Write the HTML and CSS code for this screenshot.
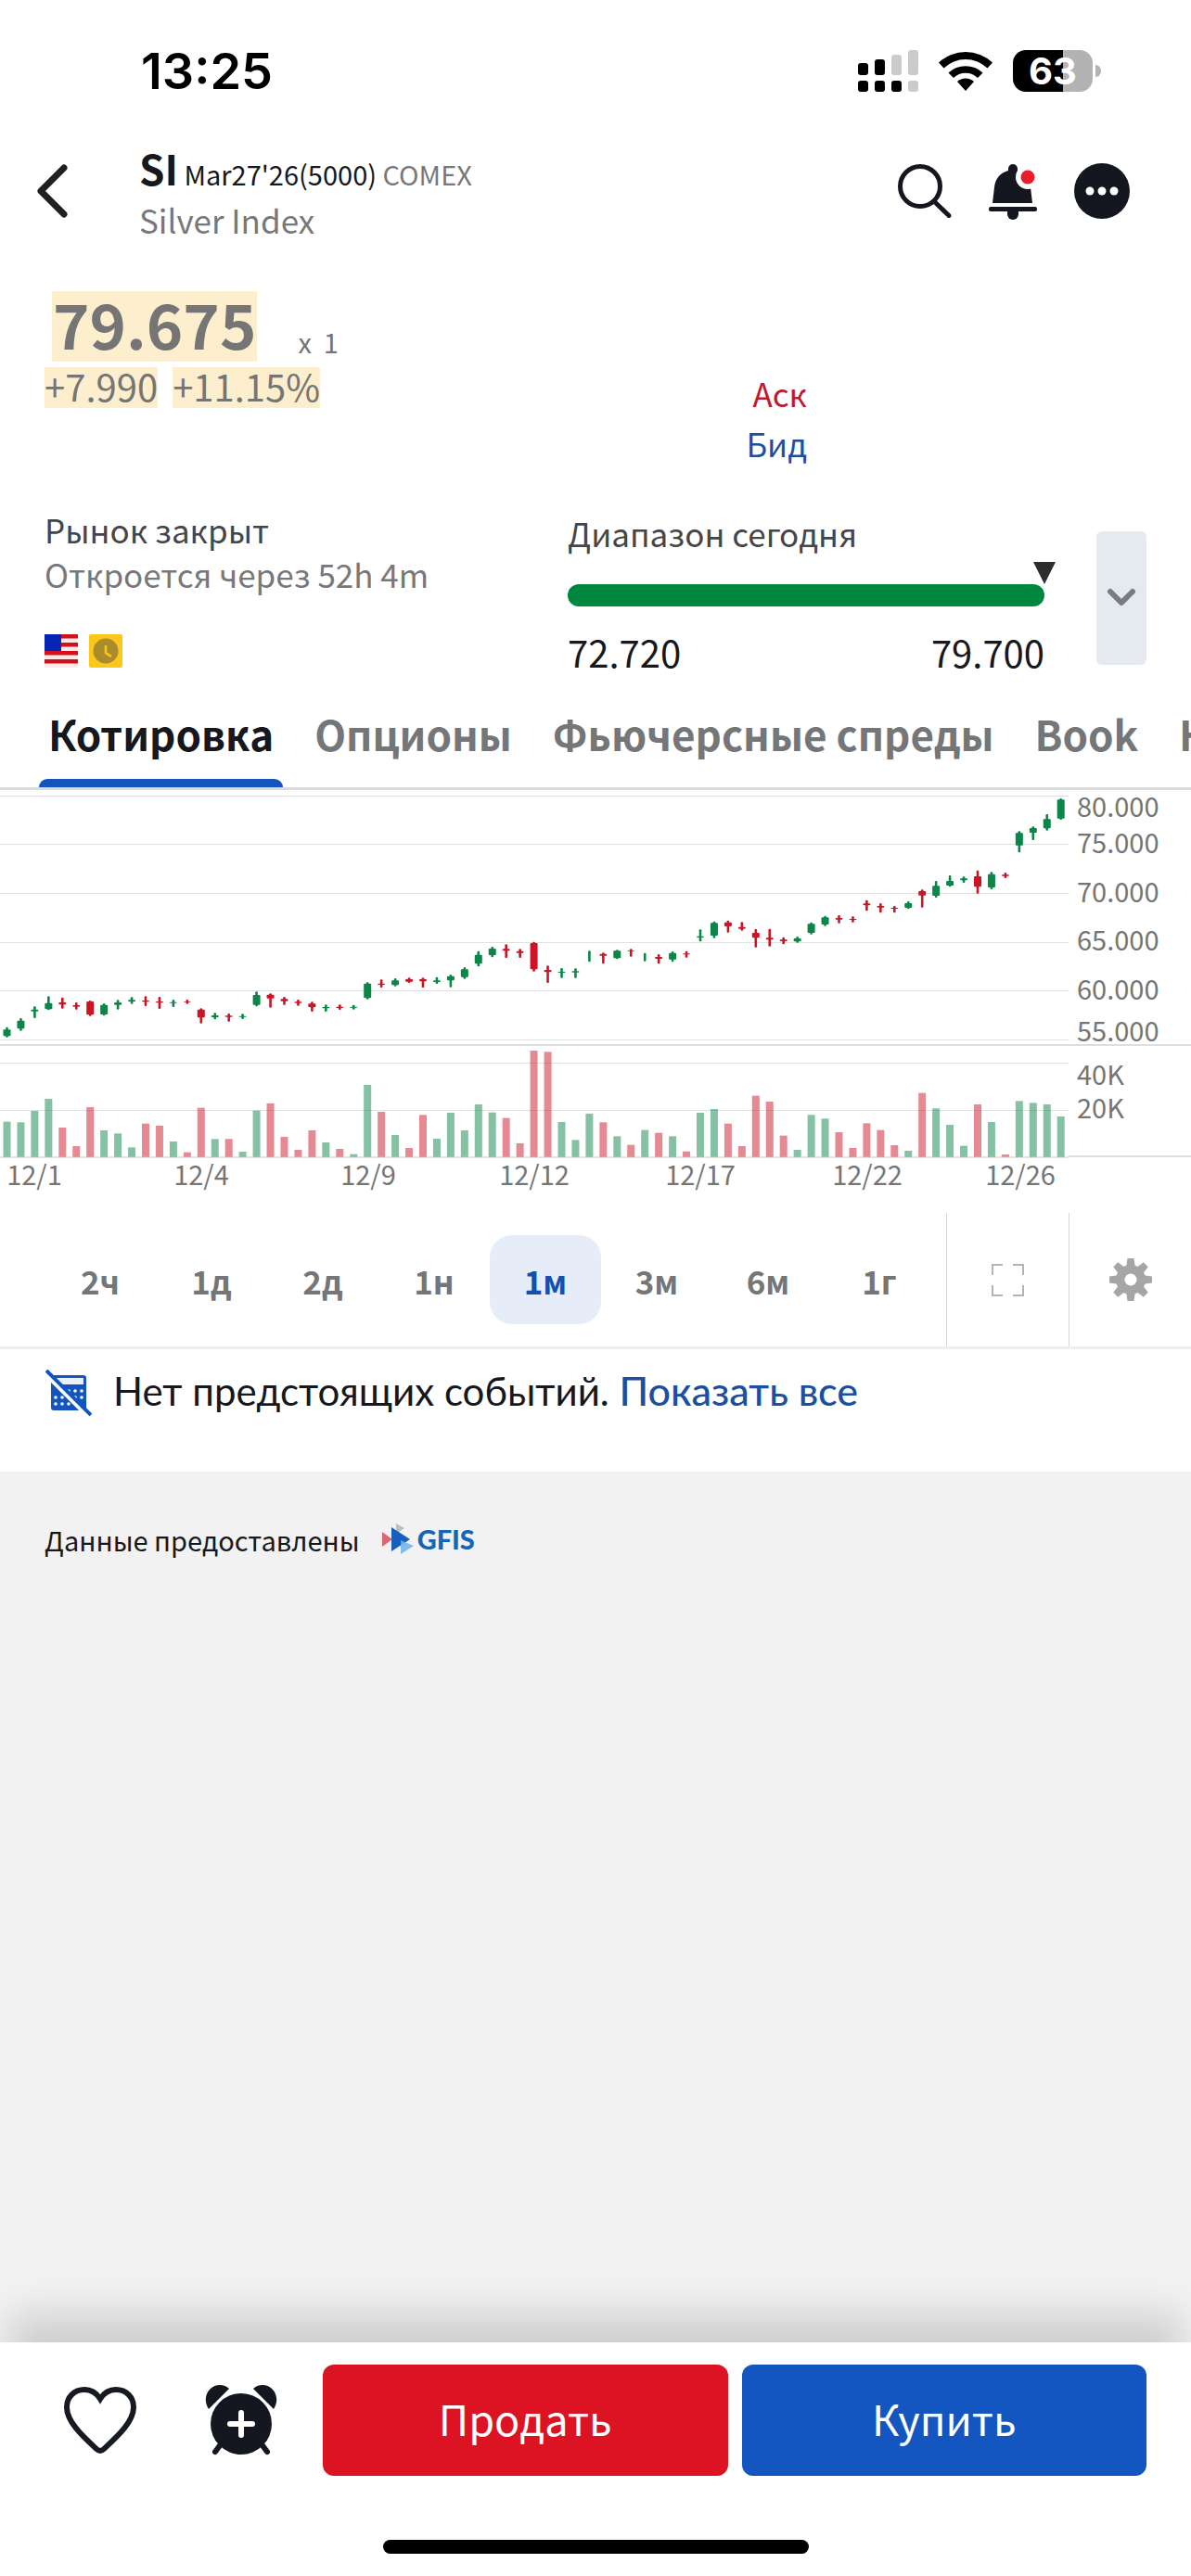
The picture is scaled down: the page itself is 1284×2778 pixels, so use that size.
FILE: index.html
```html
<!DOCTYPE html>
<html lang="ru">
<head>
    <meta charset="UTF-8">
    <meta name="viewport" content="width=device-width, initial-scale=1.0">
    <title>SI Mar27'26 - Silver Index</title>
    <link rel="stylesheet" href="styles.css">
</head>
<body>
    <div class="status-bar">
        <div class="time">13:25</div>
        <div class="status-icons">
            <svg width="65" height="45" viewBox="0 0 65 45">
                <g fill="#000">
                    <rect x="0" y="14" width="11" height="13" rx="3"/>
                    <rect x="18" y="10" width="11" height="17" rx="3"/>
                    <rect x="0" y="33" width="11" height="12" rx="3"/>
                    <rect x="18" y="33" width="11" height="12" rx="3"/>
                    <rect x="36" y="33" width="11" height="12" rx="3"/>
                </g>
                <g fill="#cbcbcb">
                    <rect x="36" y="5" width="11" height="22" rx="3"/>
                    <rect x="54" y="0" width="11" height="27" rx="3"/>
                    <rect x="54" y="33" width="11" height="12" rx="3"/>
                </g>
            </svg>
            <svg width="58" height="43" viewBox="0 0 58 43">
                <path d="M0 12.600A42 42 0 0 1 58 12.600L52.500 18.500A34 34 0 0 0 5.500 18.500Z"/>
                <path d="M10.500 23.500A27 27 0 0 1 47.500 23.500L42 29A19 19 0 0 0 16 29Z"/>
                <path d="M20 33A13 13 0 0 1 38 33L29 43Z"/>
            </svg>
            <div class="battery"><span>63</span></div>
        </div>
    </div>

    <header class="header">
        <button class="icon-btn back" aria-label="Назад">
            <svg width="34" height="58" viewBox="0 0 34 58"><path d="M30 4L5 29L30 54" fill="none" stroke="#1f1f21" stroke-width="7" stroke-linecap="round" stroke-linejoin="round"/></svg>
        </button>
        <div class="title">
            <h1><b>SI</b> Mar27'26(5000) <span>COMEX</span></h1>
            <p>Silver Index</p>
        </div>
        <button class="icon-btn" aria-label="Поиск">
            <svg width="58" height="58" viewBox="0 0 58 58"><g fill="none" stroke="#14171f" stroke-width="5" stroke-linecap="round"><circle cx="24" cy="24" r="21.500"/><path d="M40 41L55 55.500"/></g></svg>
        </button>
        <button class="icon-btn" aria-label="Уведомления">
            <svg width="54" height="61" viewBox="0 0 54 61">
                <path fill="#14171f" d="M22 6a5 5 0 0 1 10 0v2c9 3 13 8 14 18l2 17H5l2-17C8 16 14 10 22 8z"/>
                <rect x="1" y="47" width="52" height="5" rx="2" fill="#14171f"/>
                <path fill="#14171f" d="M21 52h12v3a6 6 0 0 1-12 0z"/>
                <circle cx="43" cy="15" r="13" fill="#fff"/>
                <circle cx="43" cy="15" r="7.500" fill="#ea1c2c"/>
            </svg>
        </button>
        <button class="icon-btn" aria-label="Ещё">
            <svg width="60" height="60" viewBox="0 0 60 60"><circle cx="30" cy="30" r="30" fill="#14171f"/><g fill="#fff"><circle cx="17" cy="30" r="4.500"/><circle cx="30" cy="30" r="4.500"/><circle cx="43" cy="30" r="4.500"/></g></svg>
        </button>
    </header>

    <section class="quote">
        <div>
            <div class="price-row"><strong class="price">79.675</strong><span class="size">x&nbsp; 1</span></div>
            <div class="change-row"><span>+7.990</span><span>+11.15%</span></div>
        </div>
        <div class="bid-ask">
            <div class="ask">Аск</div>
            <div class="bid">Бид</div>
        </div>
    </section>

    <section class="info">
        <div class="market">
            <p class="market-state">Рынок закрыт</p>
            <p class="market-open">Откроется через 52h 4m</p>
            <div class="flags">
                <svg width="36" height="36" viewBox="0 0 36 36">
                    <rect width="36" height="36" rx="2" fill="#fbe9ea"/>
                    <path stroke="#d0131b" stroke-width="4.500" d="M0 2.200h36M0 11.200h36M0 20.200h36M0 29.200h36"/>
                    <rect width="18" height="18" fill="#0526b4"/>
                </svg>
                <svg width="36" height="36" viewBox="0 0 36 36">
                    <rect width="36" height="36" rx="2" fill="#fac81a"/>
                    <circle cx="18" cy="18" r="13.500" fill="#ab8c2c"/>
                    <path d="M18 12v8l6 4" fill="none" stroke="#fac81a" stroke-width="2.500"/>
                </svg>
            </div>
        </div>
        <div class="range">
            <p class="range-title">Диапазон сегодня</p>
            <div class="range-bar">
                <svg class="range-mark" width="24" height="24" viewBox="0 0 24 24"><path d="M0 0h24L12 24z" fill="#2d2d2f"/></svg>
            </div>
            <div class="range-values"><span>72.720</span><span>79.700</span></div>
        </div>
        <button class="expand" aria-label="Развернуть">
            <svg width="32" height="22" viewBox="0 0 32 22"><path d="M4 4l12 12L28 4" fill="none" stroke="#7a7b7e" stroke-width="6" stroke-linecap="round" stroke-linejoin="round"/></svg>
        </button>
    </section>

    <nav class="tabs">
        <a href="#quote" class="active">Котировка</a>
        <a href="#options">Опционы</a>
        <a href="#spreads">Фьючерсные спреды</a>
        <a href="#book">Book</a>
        <a href="#news">Новости</a>
    </nav>

    <svg class="chart" id="chart" viewBox="0 0 1284 456" role="img" aria-label="SI, 1м">
        <g id="grid"></g>
        <g id="bars"></g>
        <g id="labels"></g>
    </svg>

    <div class="periods">
        <div class="period-list">
            <button>2ч</button>
            <button>1д</button>
            <button>2д</button>
            <button>1н</button>
            <button class="active">1м</button>
            <button>3м</button>
            <button>6м</button>
            <button>1г</button>
        </div>
        <button class="tool" aria-label="На весь экран">
            <svg width="35" height="35" viewBox="0 0 35 35"><path d="M1 12V1h11M23 1h11v11M34 23v11H23M12 34H1V23" fill="none" stroke="#b4b4b4" stroke-width="2"/></svg>
        </button>
        <button class="tool" aria-label="Настройки">
            <svg width="46" height="46" viewBox="-23 -23 46 46">
                <g fill="#a6a6a6">
                    <path d="M-5-12L-3.500-23h7L5-12zM-5 12L-3.500 23h7L5 12zM-12-5L-23-3.500v7L-12 5zM12-5L23-3.500v7L12 5z"/>
                    <path transform="rotate(45)" d="M-5-12L-3.500-23h7L5-12zM-5 12L-3.500 23h7L5 12zM-12-5L-23-3.500v7L-12 5zM12-5L23-3.500v7L12 5z"/>
                    <circle r="16"/>
                </g>
                <circle r="6.500" fill="#fff"/>
            </svg>
        </button>
    </div>

    <div class="events">
        <svg width="50" height="50" viewBox="0 0 50 50">
            <rect x="6" y="6" width="38" height="38" rx="3" fill="#1455bd"/>
            <rect x="12" y="9" width="29" height="7" fill="#e8f1fd"/>
            <g fill="#fff"><circle cx="25" cy="23" r="1.800"/><circle cx="32" cy="23" r="1.800"/><circle cx="39" cy="23" r="1.800"/><circle cx="11" cy="30" r="1.800"/><circle cx="18" cy="30" r="1.800"/><circle cx="32" cy="30" r="1.800"/><circle cx="39" cy="30" r="1.800"/><circle cx="11" cy="37" r="1.800"/><circle cx="18" cy="37" r="1.800"/><circle cx="25" cy="37" r="1.800"/></g>
            <path d="M3 8L43 48" stroke="#fff" stroke-width="4"/>
            <path d="M1 1L49 49" stroke="#1455bd" stroke-width="4"/>
        </svg>
        <p>Нет предстоящих событий. <a href="#events">Показать все</a></p>
    </div>

    <main class="rest">
        <div class="provider">
            <span>Данные предоставлены</span>
            <svg width="34" height="34" viewBox="0 0 34 34">
                <path d="M15 0l9 5-9 6z" fill="#b9bcc2"/>
                <path d="M10 4l20 13-20 13z" fill="#1560bd"/>
                <path d="M0 9l11 8-11 8z" fill="#dc6672"/>
                <path d="M20 18l14 6-14 9z" fill="#6fb3ee" opacity="0.850"/>
            </svg>
            <b>GFIS</b>
        </div>
    </main>

    <footer class="footer">
        <div class="actions">
            <div class="action-icons">
                <button class="icon-btn" aria-label="В избранное">
                    <svg width="80" height="74" viewBox="0 0 80 74"><path d="M40 14C35 6 29 4 23 4C12 4 4 12 4 23C4 39 22 55 36 68q4 4 8 0C58 55 76 39 76 23C76 12 68 4 57 4C51 4 45 6 40 14z" fill="none" stroke="#171a20" stroke-width="6"/></svg>
                </button>
                <button class="icon-btn" aria-label="Добавить оповещение">
                    <svg width="80" height="76" viewBox="0 0 80 76">
                        <g fill="#14171f">
                            <circle cx="40" cy="42" r="33"/>
                            <path d="M5 26C-3 14 5 0 17 0q6 0 10 4zM75 26C83 14 75 0 63 0q-6 0-10 4z"/>
                        </g>
                        <path d="M18 64l-6 8M62 64l6 8" stroke="#14171f" stroke-width="6" stroke-linecap="round"/>
                        <path d="M40 30v24M28 42h24" stroke="#fff" stroke-width="6" stroke-linecap="round"/>
                    </svg>
                </button>
            </div>
            <button class="sell">Продать</button>
            <button class="buy">Купить</button>
        </div>
        <div class="home-indicator"></div>
    </footer>
    <script src="chart.js"></script>
</body>
</html>
```
FILE: styles.css
```css
* {
    box-sizing: border-box;
}
body {
    font-family: "Noto Sans CJK SC", "Noto Sans", sans-serif;
    margin: 0;
    min-height: 100vh;
    display: flex;
    flex-direction: column;
    background-color: #fff;
    color: #16181d;
    overflow-x: hidden;
}
p, h1 {
    margin: 0;
    font-weight: normal;
}
button {
    font-family: inherit;
    border: none;
    padding: 0;
    background: none;
    cursor: pointer;
}
a {
    text-decoration: none;
}
svg {
    display: block;
    flex-shrink: 0;
}
.status-bar {
    height: 130px;
    padding: 22px 106px 0 152px;
    display: flex;
    justify-content: space-between;
    align-items: center;
    font-family: Inter, sans-serif;
    color: #000;
}
.time {
    font-size: 54px;
    font-weight: 600;
}
.status-icons {
    display: flex;
    align-items: center;
    gap: 22px;
}
.battery {
    position: relative;
    width: 86px;
    height: 45px;
    border-radius: 14px;
    background: linear-gradient(to right, #000 63%, #b3b3b3 63%);
    color: #fff;
    font-size: 40px;
    font-weight: 700;
    line-height: 45px;
    text-align: center;
}
.battery::after {
    content: "";
    position: absolute;
    right: -9px;
    top: 16px;
    width: 6px;
    height: 13px;
    border-radius: 0 6px 6px 0;
    background: #b3b3b3;
}

/* header */
.header {
    height: 152px;
    padding: 0 66px 0 39px;
    display: flex;
    align-items: center;
    gap: 39px;
}
.back {
    margin-right: 38px;
}
.title {
    flex: 1;
}
.title h1 {
    font-size: 29px;
    line-height: 56px;
}
.title b {
    font-size: 44px;
}
.title span {
    color: #77787a;
}
.title p {
    font-size: 35px;
    line-height: 44px;
    color: #77787a;
}

/* price */
.quote {
    display: flex;
    justify-content: space-between;
    padding: 32px 414px 0 48px;
    color: #757575;
}
.price-row {
    display: flex;
    align-items: flex-end;
    padding-left: 8px;
    gap: 44px;
}
.price {
    padding: 0 1px 8px;
    font-size: 67px;
    line-height: 68px;
    background: #fdefcd;
}
.size {
    padding-bottom: 2px;
    font-size: 29px;
    line-height: 40px;
}
.change-row {
    display: flex;
    gap: 16px;
    margin-top: 6px;
    font-size: 40px;
    line-height: 40px;
}
.change-row span {
    padding-bottom: 4px;
    background: #fdefcd;
}
.bid-ask {
    padding-top: 83px;
    font-size: 35px;
    line-height: 54px;
    text-align: right;
}
.ask {
    color: #c01a2e;
}
.bid {
    color: #1d4fa0;
}

/* market info */
.info {
    display: grid;
    grid-template-columns: 1fr 514px 54px;
    gap: 56px;
    padding: 42px 48px 0;
    font-size: 35px;
    line-height: 48px;
}
.market-state, .range-title {
    color: #454648;
}
.market-open {
    color: #77787a;
}
.flags {
    display: flex;
    gap: 12px;
    margin-top: 41px;
}
.range-title {
    padding-top: 4px;
}
.range-bar {
    position: relative;
    height: 24px;
    margin-top: 31px;
    border-radius: 12px;
    background: #00873f;
}
.range-mark {
    position: absolute;
    right: -12px;
    top: -24px;
}
.range-values {
    display: flex;
    justify-content: space-between;
    margin-top: 25px;
    font-size: 40px;
}
.expand {
    height: 144px;
    margin-top: 26px;
    border-radius: 6px;
    background: #e5e9f0;
    display: flex;
    align-items: center;
    justify-content: center;
}

/* tabs */
.tabs {
    display: flex;
    gap: 24px;
    margin-top: 32px;
    padding-left: 42px;
    border-bottom: 3px solid #dcdcdc;
    overflow: hidden;
    white-space: nowrap;
}
.tabs a {
    position: relative;
    padding: 0 10px 26px;
    font-size: 44px;
    font-weight: 700;
    line-height: 64px;
    color: #757678;
}
.tabs .active {
    color: #16181d;
}
.tabs .active::after {
    content: "";
    position: absolute;
    left: 0;
    right: 0;
    bottom: 0;
    height: 9px;
    border-radius: 12px 12px 0 0;
    background: #1455bd;
}

/* chart */
.chart {
    width: 100%;
    font-size: 29px;
    fill: #757575;
}

/* periods */
.periods {
    display: flex;
    height: 147px;
    border-bottom: 3px solid #efefef;
}
.period-list {
    flex: 1;
    display: flex;
    padding: 24px 12px 24px 48px;
}
.period-list button {
    flex: 1;
    border-radius: 24px;
    font-size: 35px;
    font-weight: 700;
    color: #757678;
}
.period-list .active {
    background: #e7edf8;
    color: #1450ae;
}
.tool {
    width: 132px;
    border-left: 1px solid #d5d5d5;
    display: flex;
    align-items: center;
    justify-content: center;
}

/* events */
.events {
    display: flex;
    gap: 23px;
    height: 132px;
    padding: 22px 49px 0;
    font-family: Lato, sans-serif;
    font-size: 42px;
    line-height: 46px;
}
.events a {
    font-size: 43px;
    font-weight: 500;
    color: #1d4fa0;
}
.rest {
    flex: 1;
    background: #f2f2f2;
}
.provider {
    display: flex;
    align-items: center;
    padding: 49px 48px;
    font-size: 29px;
    line-height: 48px;
}
.provider svg {
    margin: 0 4px 0 24px;
}
.provider b {
    font-family: Lato, sans-serif;
    font-weight: 900;
    font-size: 29px;
    color: #1466b8;
}

/* footer */
.footer {
    position: sticky;
    bottom: 0;
    padding: 24px 48px;
    background: #fff;
    box-shadow: 0 -40px 40px -10px rgba(0, 0, 0, 0.15);
}
.actions {
    display: flex;
    gap: 15px;
}
.action-icons {
    display: flex;
    align-items: center;
    gap: 72px;
    padding: 0 33px 0 20px;
}
.sell, .buy {
    flex: 1;
    height: 120px;
    padding-bottom: 5px;
    border-radius: 12px;
    font-size: 45px;
    color: #fff;
}
.sell {
    background: #dc1322;
}
.buy {
    background: #1356bf;
}
.home-indicator {
    width: 459px;
    height: 15px;
    margin: 69px auto 0;
    border-radius: 8px;
    background: #000;
}
```
FILE: chart.js
```js
// one candle per row: direction, high, body top, body bottom, low, volume top
// (y values on a 3x grid)
const candles = [
    ['g', 803, 811, 832, 836, 1109], ['g', 774, 782, 808, 815, 1111], ['g', 736, 746, 752, 774, 1074],
    ['g', 703, 725, 745, 748, 1035], ['r', 707, 723, 730, 743, 1128], ['r', 723, 732, 737, 746, 1188],
    ['r', 717, 720, 763, 767, 1062], ['g', 726, 731, 762, 766, 1137], ['g', 715, 723, 731, 746, 1147],
    ['g', 706, 715, 720, 728, 1192], ['r', 703, 717, 721, 735, 1115], ['r', 705, 720, 724, 744, 1122],
    ['g', 714, 722, 725, 738, 1173], ['r', 714, 720, 722, 728, 1208], ['r', 742, 746, 772, 791, 1064],
    ['g', 757, 765, 771, 778, 1165], ['r', 759, 766, 770, 785, 1165], ['g', 760, 767, 770, 777, 1206],
    ['g', 688, 699, 731, 736, 1073], ['r', 694, 698, 710, 740, 1050], ['r', 705, 712, 719, 731, 1158],
    ['r', 714, 721, 725, 734, 1200], ['r', 721, 727, 739, 753, 1137], ['g', 730, 738, 742, 753, 1176],
    ['r', 730, 737, 741, 747, 1197], ['g', 731, 737, 740, 746, 1214], ['g', 658, 662, 709, 713, 990],
    ['r', 649, 662, 666, 675, 1077], ['g', 645, 652, 667, 671, 1152], ['r', 643, 648, 656, 660, 1194],
    ['r', 643, 648, 655, 675, 1087], ['g', 641, 652, 657, 663, 1164], ['g', 633, 638, 652, 674, 1080],
    ['g', 609, 616, 641, 647, 1137], ['g', 557, 569, 598, 607, 1053], ['g', 543, 549, 570, 577, 1079],
    ['r', 535, 550, 556, 579, 1097], ['r', 550, 557, 563, 579, 1179], ['r', 527, 531, 616, 623, 879],
    ['r', 604, 618, 625, 660, 883], ['g', 612, 624, 627, 644, 1110], ['g', 613, 622, 626, 644, 1168],
    ['g', 556, 574, 574, 592, 1083], ['r', 562, 566, 572, 598, 1111], ['g', 553, 556, 580, 583, 1156],
    ['r', 550, 556, 558, 575, 1184], ['g', 563, 575, 575, 590, 1136], ['r', 567, 576, 582, 598, 1145],
    ['g', 558, 563, 584, 592, 1156], ['r', 557, 565, 568, 578, 1205], ['g', 487, 509, 513, 526, 1080],
    ['g', 461, 466, 507, 515, 1068], ['r', 458, 464, 477, 497, 1115], ['r', 463, 479, 485, 491, 1188],
    ['r', 486, 498, 514, 545, 1025], ['r', 485, 514, 520, 542, 1044], ['r', 512, 520, 525, 535, 1154],
    ['g', 510, 516, 526, 530, 1200], ['g', 464, 469, 498, 503, 1087], ['g', 443, 448, 471, 476, 1099],
    ['r', 441, 450, 455, 467, 1143], ['r', 445, 453, 456, 464, 1194], ['r', 392, 403, 409, 427, 1114],
    ['r', 402, 411, 416, 433, 1136], ['r', 411, 417, 420, 433, 1185], ['g', 396, 402, 417, 421, 1203],
    ['r', 358, 363, 377, 416, 1016], ['g', 330, 346, 378, 384, 1066], ['g', 312, 330, 345, 349, 1119],
    ['g', 316, 322, 328, 336, 1187], ['r', 296, 315, 349, 371, 1053], ['g', 301, 308, 351, 357, 1110],
    ['r', 303, 310, 314, 321, 1215], ['g', 169, 175, 215, 238, 1042], ['g', 154, 159, 174, 198, 1048],
    ['g', 114, 130, 160, 167, 1053], ['g', 63, 67, 128, 132, 1092]
];
const colors = { g: '#0b8648', r: '#cb1426' };
const TOP = 12;
const y = v => v / 3 - TOP;

function rect(x, top, w, h, fill, rx = 0, opacity = 1) {
    return `<rect x="${x}" y="${top}" width="${w}" height="${h}" rx="${rx}" fill="${fill}" opacity="${opacity}"/>`;
}

let grid = '';
[58, 214, 372, 530, 688, 846, 922, 1073].forEach(v => {
    grid += rect(0, Math.round(y(v)) - 1, 1152, 1, '#e0e0e0');
});
grid += rect(0, 274, 1284, 2, '#dedede');
grid += rect(0, 395, 1152, 2, '#e3e3e3');
grid += rect(1152, 394, 132, 2, '#dedede');
document.getElementById('grid').innerHTML = grid;

let bars = '';
candles.forEach(([dir, high, top, bottom, low, vol], i) => {
    const x = 7.5 + i * 14.95;
    bars += rect(x - 1.3, y(high), 2.6, (low - high) / 3, colors[dir], 1);
    bars += rect(x - 4, y(top), 8, (bottom - top) / 3, colors[dir], 1);
    bars += rect(x - 4, y(vol), 8, (1223 - vol) / 3, colors[dir], 0, 0.5);
});
document.getElementById('bars').innerHTML = bars;

const prices = [['80.000', 29], ['75.000', 68], ['70.000', 121], ['65.000', 173], ['60.000', 226], ['55.000', 271], ['40K', 318], ['20K', 354]];
const dates = [['12/1', 37], ['12/4', 217], ['12/9', 397], ['12/12', 576], ['12/17', 755], ['12/22', 935], ['12/26', 1100]];
let labels = '';
prices.forEach(([text, base]) => {
    labels += `<text x="1161" y="${base}">${text}</text>`;
});
dates.forEach(([text, x]) => {
    labels += `<text x="${x}" y="426" text-anchor="middle">${text}</text>`;
});
document.getElementById('labels').innerHTML = labels;
```
